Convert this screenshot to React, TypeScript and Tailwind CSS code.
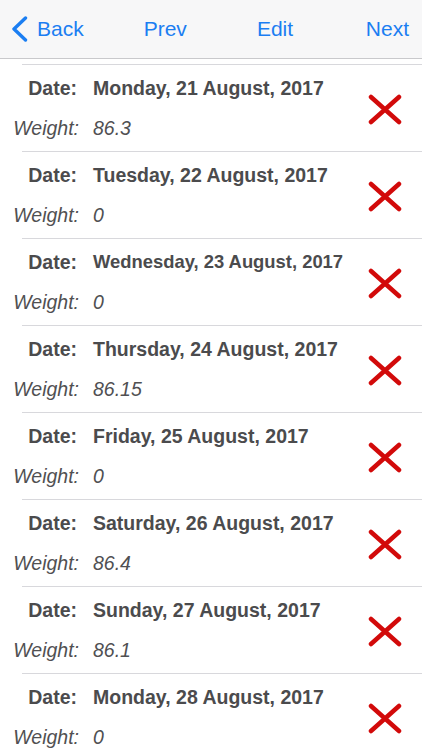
import React from 'react';

type Entry = {
  date: string;
  weight: string;
  shrink?: boolean;
};

const entries: Entry[] = [
  { date: 'Monday, 21 August, 2017', weight: '86.3' },
  { date: 'Tuesday, 22 August, 2017', weight: '0' },
  { date: 'Wednesday, 23 August, 2017', weight: '0', shrink: true },
  { date: 'Thursday, 24 August, 2017', weight: '86.15' },
  { date: 'Friday, 25 August, 2017', weight: '0' },
  { date: 'Saturday, 26 August, 2017', weight: '86.4' },
  { date: 'Sunday, 27 August, 2017', weight: '86.1' },
  { date: 'Monday, 28 August, 2017', weight: '0' },
];

function DeleteMark() {
  return (
    <svg width="34" height="31" viewBox="0 0 34 31" aria-hidden="true">
      <path d="M3 3 L31 28 M31 3 L3 28" stroke="#d20a0a" strokeWidth="4.5" strokeLinecap="round" fill="none" />
    </svg>
  );
}

function NavBar() {
  return (
    <div className="flex h-[59px] items-center border-b border-[#c9c9cc] bg-[#f7f7f8] text-[21px] text-[#1b7ef2]">
      <button className="ml-[11px] flex items-center">
        <svg width="17" height="26" viewBox="0 0 17 26" aria-hidden="true">
          <path d="M14.5 2 L3 13 L14.5 24" stroke="#1b7ef2" strokeWidth="3.4" strokeLinecap="round" strokeLinejoin="round" fill="none" />
        </svg>
        <span className="ml-[9px]">Back</span>
      </button>
      <button className="ml-[60px]">Prev</button>
      <button className="ml-[70px]">Edit</button>
      <button className="ml-auto mr-[13px]">Next</button>
    </div>
  );
}

function EntryRow({ entry }: { entry: Entry }) {
  return (
    <div className="h-[87px]">
      <div className="ml-[22px] h-px bg-[#d8d8dc]" />
      <div className="flex h-[86px]">
        <div className="flex flex-col pt-[12px] text-[19.5px] leading-[22px]">
          <div className="flex items-center">
            <span className="w-[77px] whitespace-nowrap text-right font-bold text-[#4b4b4d]">Date:</span>
            <span
              className={`ml-[16px] whitespace-nowrap font-bold text-[#4b4b4d] ${
                entry.shrink ? 'text-[18.4px]' : ''
              }`}
            >
              {entry.date}
            </span>
          </div>
          <div className="mt-[18px] flex">
            <span className="w-[79px] whitespace-nowrap text-right italic text-[#505052]">Weight:</span>
            <span className="ml-[14px] italic text-[#505052]">{entry.weight}</span>
          </div>
        </div>
        <div className="ml-auto mr-[20px] mt-[29px]">
          <DeleteMark />
        </div>
      </div>
    </div>
  );
}

export default function App() {
  return (
    <div className="h-[750px] w-[422px] overflow-hidden bg-white font-['Liberation_Sans',Arial,sans-serif]">
      <NavBar />
      <div className="pt-[5px]">
        {entries.map((entry) => (
          <EntryRow key={entry.date} entry={entry} />
        ))}
      </div>
    </div>
  );
}
